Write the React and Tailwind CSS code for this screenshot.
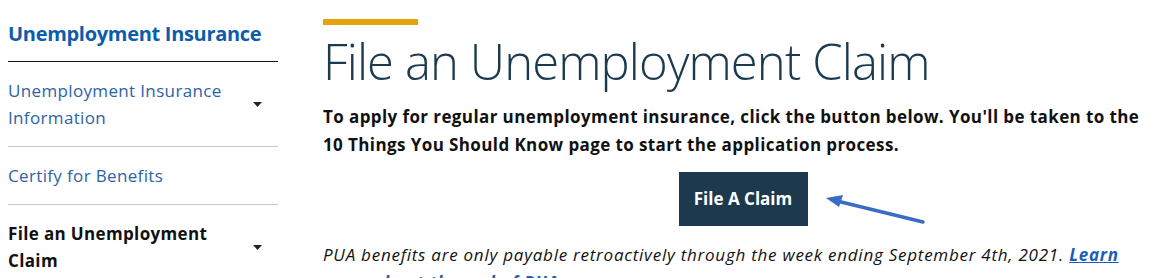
import React from 'react';

const Caret = () => (
  <svg width="9" height="5" viewBox="0 0 9 5" className="shrink-0 mr-[16px]">
    <path d="M0 0h9L4.5 5z" fill="#222" />
  </svg>
);

const NavItem = ({ children, active, caret }) => (
  <div className="flex items-center justify-between py-[15px] border-b border-[#c6c6c6] last:border-b-0">
    <span className={active ? 'font-bold text-[#111] text-[17px] leading-[27px] tracking-[0.35px] w-[220px]' : 'text-[#2d62a6] text-[17px] leading-[27px] tracking-[0.35px] w-[230px]'}>
      {children}
    </span>
    {caret && <Caret />}
  </div>
);

export default function App() {
  return (
    <div className="w-[1163px] h-[278px] overflow-hidden bg-white flex gap-[45px] pl-[8px]" style={{ fontFamily: '"Open Sans", "Noto Sans", sans-serif' }}>
      <aside className="w-[270px] shrink-0 pt-[20px]">
        <div className="text-[#0b5cad] font-bold text-[20px] leading-[28px] tracking-[-0.3px] pb-[13px] border-b border-[#111]">
          Unemployment Insurance
        </div>
        <NavItem caret>Unemployment Insurance Information</NavItem>
        <NavItem>Certify for Benefits</NavItem>
        <NavItem active caret>File an Unemployment Claim</NavItem>
      </aside>

      <main className="flex-1 pt-[19px]">
        <div className="w-[95px] h-[6px] bg-[#e2a30c]" />
        <h1 className="mt-[6px] text-[49px] leading-[60px] font-light text-[#1b3a4e] tracking-[-0.9px]">
          File an Unemployment Claim
        </h1>
        <p className="mt-[12px] font-bold text-[17px] leading-[28px] tracking-[0.4px] text-[#111] pr-[20px]">
          To apply for regular unemployment insurance, click the button below. You'll be taken to the 10 Things You Should Know page to start the application process.
        </p>
        <div className="relative mt-[13px] flex justify-center">
          <button className="w-[129px] h-[54px] bg-[#1c394d] text-white font-bold text-[17px]">File A Claim</button>
          <svg className="absolute left-[500px] top-[22px]" width="104" height="32" viewBox="0 0 104 32">
            <path d="M100 28L14 7" stroke="#3a6cc4" strokeWidth="3.5" strokeLinecap="round" />
            <path d="M3 4L20 1L16 13z" fill="#3a6cc4" />
          </svg>
        </div>
        <p className="mt-[15px] italic text-[17px] leading-[28px] tracking-[0.75px] text-[#111] pr-[20px]">
          PUA benefits are only payable retroactively through the week ending September 4th, 2021.{' '}
          <a href="#" className="font-bold underline text-[#1a5fb4]">Learn more about the end of PUA</a>.
        </p>
      </main>
    </div>
  );
}
